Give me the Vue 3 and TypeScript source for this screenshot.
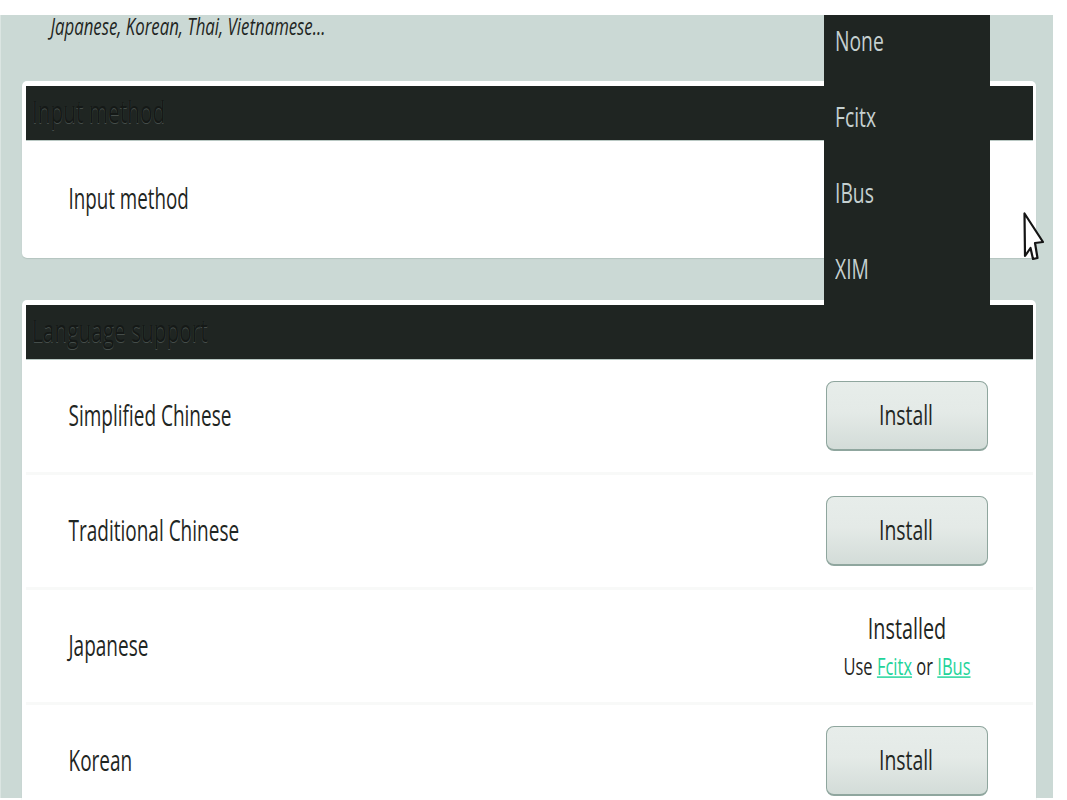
<script setup lang="ts">
interface Lang { name: string; installed?: boolean }
const langs: Lang[] = [
  { name: 'Simplified Chinese' },
  { name: 'Traditional Chinese' },
  { name: 'Japanese', installed: true },
  { name: 'Korean' },
]
const methods = ['None', 'Fcitx', 'IBus', 'XIM']
</script>

<template>
  <div class="page">
    <main class="panel">
      <p class="intro"><span class="t">Japanese, Korean, Thai, Vietnamese...</span></p>

      <section class="card first">
        <h2 class="head"><span class="t">Input method</span></h2>
        <div class="row method"><span class="t name short">Input method</span></div>
      </section>

      <section class="card">
        <h2 class="head"><span class="t">Language support</span></h2>
        <div v-for="l in langs" :key="l.name" class="row lang">
          <span class="t name">{{ l.name }}</span>
          <div class="side">
            <div v-if="l.installed" class="status">
              <span class="t">Installed</span>
              <span class="t small">Use <a href="#">Fcitx</a> or <a href="#">IBus</a></span>
            </div>
            <button v-else class="btn"><span class="t">Install</span></button>
          </div>
        </div>
      </section>
    </main>

    <ul class="menu">
      <li v-for="m in methods" :key="m"><span class="t">{{ m }}</span></li>
    </ul>

    <svg class="cursor" width="22" height="50" viewBox="0 0 22 50">
      <path d="M1.5 1.5 L2 44 L7.5 36 L10 47 L14.5 46 L12 31 L20 30 Z" fill="#fff" stroke="#141414" stroke-width="2.2" stroke-linejoin="round" />
    </svg>
  </div>
</template>

<style scoped>
.page {
  position: relative;
  height: 800px;
  overflow: hidden;
  background: #fff;
  padding-top: 15px;
  box-sizing: border-box;
  font-family: "Open Sans", "Noto Sans", sans-serif;
  color: #1f2623;
}
.t {
  display: inline-block;
  transform: scaleY(1.45);
  white-space: nowrap;
}
.panel {
  width: 1053px;
  height: 783px;
  box-sizing: border-box;
  background: #cbd9d5;
  border-left: 1px solid #dbe5e2;
  padding: 0 17px 0 21px;
}
.intro {
  margin: 0;
  height: 66px;
  padding: 0 0 0 28.5px;
  font-size: 16.8px;
  font-style: italic;
  line-height: 22px;
}
.card {
  background: #fff;
  border-radius: 5px;
  padding: 5px 3px 0 4px;
  box-shadow: 0 1px 1px #b4c4bf;
}
.first {
  height: 177px;
  box-sizing: border-box;
  margin-bottom: 42px;
}
.head {
  margin: 0;
  height: 54px;
  background: #1f2522;
  padding-left: 6px;
  font-size: 20.8px;
  font-weight: 400;
  line-height: 50px;
  color: #151917;
  text-shadow: 0 1px 0 #454d4a;
  border-bottom: 1px solid #b9c8c3;
}
.row {
  display: flex;
  align-items: center;
  justify-content: space-between;
  padding-left: 42.5px;
  font-size: 19.8px;
}
.name {
  font-size: 19px;
  transform: scaleY(1.52);
  position: relative;
  top: -1.5px;
}
.short { font-size: 18.8px; }
.method { height: 117px; }
.lang {
  height: 112px;
  padding-right: 45px;
  border-bottom: 3px solid #f8f9f8;
}
.side {
  width: 162px;
  display: flex;
  justify-content: center;
}
.btn {
  width: 162px;
  height: 70px;
  padding: 0 2px 3px 0;
  font: inherit;
  font-size: 19.4px;
  color: inherit;
  border: 1.5px solid #8fa69e;
  border-bottom-width: 2px;
  border-radius: 8px;
  background: linear-gradient(#e7edea 0%, #e4eae7 45%, #d3dcd8 100%);
}
.status {
  display: flex;
  flex-direction: column;
  align-items: center;
  gap: 12px;
  line-height: 27px;
}
.small { font-size: 16.5px; line-height: 23px; }
.small a { color: #1fd49a; }
.menu {
  position: absolute;
  top: 15px;
  left: 824px;
  width: 166px;
  height: 290px;
  margin: 0;
  padding: 0;
  list-style: none;
  background: #1f2522;
  color: #c5d0d0;
  font-size: 19.3px;
}
.menu li {
  height: 76px;
  line-height: 52px;
  padding-left: 11px;
}
.cursor {
  position: absolute;
  left: 1023px;
  top: 212px;
}
</style>
